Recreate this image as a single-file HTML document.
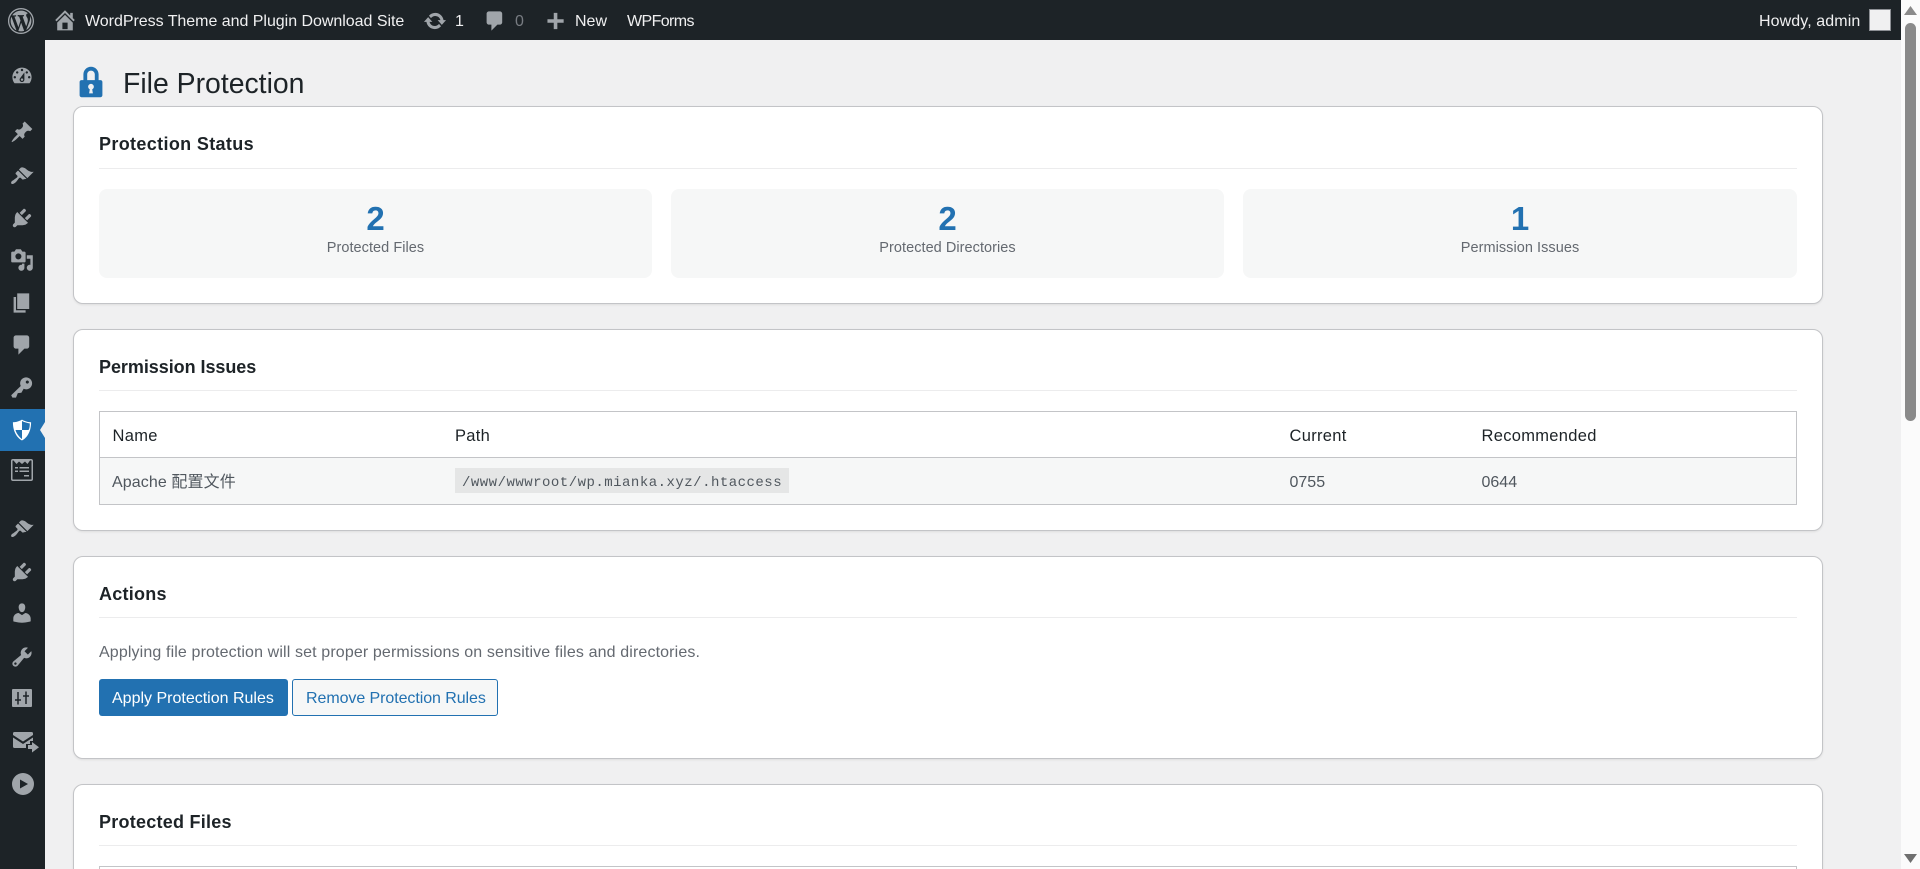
<!DOCTYPE html>
<html lang="en">
<head>
<meta charset="utf-8">
<title>File Protection</title>
<style>
html,body{margin:0;padding:0;width:1920px;height:869px;overflow:hidden;background:#f0f0f1;font-family:"Liberation Sans","Noto Sans CJK SC",sans-serif}
*{box-sizing:border-box}
#wrap{position:relative;width:1920px;height:869px;overflow:hidden;background:#f0f0f1}
.a{position:absolute}
.t{position:absolute;white-space:nowrap;line-height:20px;height:20px}
svg{position:absolute;display:block}
#bar{left:0;top:0;width:1901px;height:40px;background:#1d2327}
#side{left:0;top:40px;width:45px;height:829px;background:#1d2327}
#sb{left:1901px;top:0;width:19px;height:869px;background:#fbfbfb}
.bt{color:#f0f0f1;font-size:16px}
.i{fill:#a0a5aa}
.card{position:absolute;left:73px;width:1750px;background:#fff;border:1px solid #c3c4c7;border-radius:10px;box-shadow:0 1px 2px rgba(0,0,0,.08)}
.h{position:absolute;left:99px;font-size:18px;font-weight:bold;color:#1d2327;white-space:nowrap;line-height:20px;height:20px;letter-spacing:.25px}
.hr{position:absolute;left:99px;width:1698px;height:1px;background:#ececed}
.stat{position:absolute;top:189px;height:89px;width:553px;background:#f6f7f7;border-radius:8px}
.n{position:absolute;left:0;right:0;top:12px;text-align:center;font-size:33px;font-weight:bold;color:#2271b1;line-height:36px}
.l{position:absolute;left:0;right:0;top:49px;text-align:center;font-size:14.5px;color:#646970;line-height:20px;letter-spacing:.05px}
.tb{position:absolute;left:99px;width:1698px;border:1px solid #c3c4c7}
.th{color:#1d2327;font-size:16.5px;letter-spacing:.3px}
.td{color:#50575e;font-size:16px}
</style>
</head>
<body>
<div id="wrap">
<div class="a" id="bar"></div>
<div class="a" id="side"></div>
<div class="a" id="sb">
  <svg style="left:3px;top:6px" width="13" height="9" viewBox="0 0 13 9"><path d="M6.5 0L13 9H0z" fill="#8a8a8a"/></svg>
  <div class="a" style="left:4px;top:23px;width:11px;height:398px;background:#8a8a8a;border-radius:6px"></div>
  <svg style="left:3px;top:854px" width="13" height="9" viewBox="0 0 13 9"><path d="M0 0h13L6.5 9z" fill="#6f6f6f"/></svg>
</div>

<!-- admin bar -->
<svg style="left:8px;top:8px" width="26" height="26" viewBox="0 0 20 20"><path class="i" d="M20 10c0-5.52-4.48-10-10-10S0 4.48 0 10s4.48 10 10 10 10-4.48 10-10zM10 1.01c4.96 0 8.99 4.03 8.99 8.99s-4.03 8.99-8.99 8.99S1.01 14.96 1.01 10 5.04 1.01 10 1.01zM8.01 14.82L4.96 6.61c.49-.03 1.05-.08 1.05-.08.43-.05.38-1.01-.06-.99 0 0-1.29.1-2.13.1-.15 0-.33 0-.52-.01 1.44-2.17 3.9-3.6 6.7-3.6 2.09 0 3.99.79 5.41 2.09-.6-.08-1.45.35-1.45 1.42 0 .66.38 1.22.79 1.88.31.54.5 1.22.5 2.21 0 1.34-1.27 4.48-1.27 4.48l-2.71-7.5c.48-.03.75-.16.75-.16.43-.05.38-1.1-.05-1.08 0 0-1.3.11-2.14.11-.78 0-2.11-.11-2.11-.11-.43-.02-.48 1.06-.05 1.08l.84.08 1.12 3.04zm6.02 2.15L16.64 10s.67-1.69.39-3.81c.63 1.14.94 2.42.94 3.81 0 2.96-1.56 5.58-3.94 6.97zM2.68 6.77L6.5 17.25c-2.67-1.3-4.47-4.04-4.47-7.25 0-1.18.2-2.26.65-3.23zm7.45 4.53l2.29 6.25c-.75.27-1.57.42-2.42.42-.72 0-1.41-.11-2.06-.3z"/></svg>
<svg style="left:52px;top:7px" width="26" height="26" viewBox="0 0 20 20"><path class="i" d="M16 8.5l1.53 1.53-1.06 1.06L10 4.62l-6.47 6.47-1.06-1.06L10 2.5l4 4v-2h2v4zm-6-2.46l6 5.99V18H4v-5.97zM12 17v-5H8v5h4z"/></svg>
<div class="t bt" style="left:85px;top:12px;letter-spacing:-.03px">WordPress Theme and Plugin Download Site</div>
<svg style="left:423px;top:9px" width="24" height="24" viewBox="0 0 20 20"><path class="i" d="M10.2 3.28c3.53 0 6.43 2.61 6.92 6h2.08l-3.5 4-3.5-4h2.32c-.45-1.97-2.21-3.45-4.32-3.45-1.45 0-2.73.71-3.54 1.78L4.95 5.66C6.23 4.2 8.11 3.28 10.2 3.28zm-.4 13.44c-3.52 0-6.43-2.61-6.92-6H.8l3.5-4c1.17 1.33 2.33 2.67 3.5 4H5.48c.45 1.97 2.21 3.45 4.32 3.45 1.45 0 2.73-.71 3.54-1.78l1.71 1.95c-1.28 1.46-3.15 2.38-5.25 2.38z"/></svg>
<div class="t bt" style="left:455px;top:12px">1</div>
<svg style="left:483px;top:9px" width="24" height="24" viewBox="0 0 20 20"><path class="i" d="M5 2h9c1.1 0 2 .9 2 2v7c0 1.1-.9 2-2 2h-2l-5 5v-5H5c-1.1 0-2-.9-2-2V4c0-1.1.9-2 2-2z"/></svg>
<div class="t bt" style="left:515px;top:12px;color:#787c82">0</div>
<svg style="left:547px;top:12px" width="18" height="18" viewBox="0 0 20 20"><path class="i" d="M7.5 1h4v7H18.500v4h-7v7h-4v-7H.5V8h7z"/></svg>
<div class="t bt" style="left:575px;top:12px">New</div>
<div class="t bt" style="left:627px;top:12px;letter-spacing:-.6px">WPForms</div>
<div class="t bt" style="left:1759px;top:12px;letter-spacing:.1px">Howdy, admin</div>
<div class="a" style="left:1869px;top:9px;width:22px;height:22px;background:#f0f0f1;border:1px solid #8c8f94"></div>

<!-- side menu -->
<svg style="left:10px;top:64px" width="24" height="24" viewBox="0 0 20 20"><path class="i" d="M3.76 16h12.48c1.1-1.37 1.76-3.11 1.76-5 0-4.42-3.58-8-8-8s-8 3.58-8 8c0 1.89.66 3.63 1.76 5zM10 4c.55 0 1 .45 1 1s-.45 1-1 1-1-.45-1-1 .45-1 1-1zM6 6c.55 0 1 .45 1 1s-.45 1-1 1-1-.45-1-1 .45-1 1-1zm8 0c.55 0 1 .45 1 1s-.45 1-1 1-1-.45-1-1 .45-1 1-1zm-5.37 5.55L12 7v6c0 1.1-.9 2-2 2s-2-.9-2-2c0-.57.24-1.08.63-1.45zM4 10c.55 0 1 .45 1 1s-.45 1-1 1-1-.45-1-1 .45-1 1-1zm12 0c.55 0 1 .45 1 1s-.45 1-1 1-1-.45-1-1 .45-1 1-1zm-5 3c0-.55-.45-1-1-1s-1 .45-1 1 .45 1 1 1 1-.45 1-1z"/></svg>
<svg style="left:10px;top:120px" width="24" height="24" viewBox="0 0 20 20"><path class="i" d="M10.44 3.02l1.82-1.82 6.36 6.35-1.83 1.82c-1.05-.68-2.48-.57-3.41.36l-.75.75c-.92.93-1.04 2.35-.35 3.41l-1.83 1.82-2.41-2.41-2.8 2.79c-.42.42-3.38 2.71-3.8 2.29s1.86-3.39 2.28-3.81l2.79-2.79L4.1 9.36l1.83-1.82c1.05.69 2.48.57 3.4-.36l.75-.75c.93-.92 1.05-2.35.36-3.41z"/></svg>
<svg style="left:10px;top:163px" width="24" height="24" viewBox="0 0 20 20"><path class="i" d="M14.48 11.06L7.41 3.99l1.5-1.5c.5-.56 2.3-.47 3.51.32 1.21.8 1.43 1.28 2.91 2.1 1.18.64 2.45 1.26 4.45.85zm-.71.71L6.7 4.7 4.93 6.47c-.39.39-.39 1.02 0 1.41l1.06 1.06c.39.39.39 1.03 0 1.42-.6.6-1.43 1.11-2.21 1.69-.35.26-.7.53-1.01.84C1.43 13.23.4 14.89 1.25 15.74c.84.84 2.5-.18 3.84-1.52.31-.31.58-.66.85-1.02.57-.78 1.08-1.61 1.69-2.21.39-.39 1.02-.39 1.41 0l1.06 1.06c.39.39 1.02.39 1.41 0z" transform="translate(0 1.500)"/></svg>
<svg style="left:10px;top:206px" width="24" height="24" viewBox="0 0 20 20"><path class="i" d="M13.11 4.36L9.87 7.6 8 5.73l3.24-3.24c.35-.34 1.05-.2 1.56.32.52.51.66 1.21.31 1.55zm-8 1.77l.91-1.12 9.01 9.01-1.19.84c-.71.71-2.63 1.16-3.82 1.16H6.14L4.9 17.26c-.59.59-1.54.59-2.12 0-.59-.58-.59-1.53 0-2.12l1.24-1.24v-3.88c0-1.13.4-3.19 1.09-3.89zm7.26 3.97l3.24-3.24c.34-.35 1.04-.21 1.55.31.52.51.66 1.21.31 1.55l-3.24 3.25z"/></svg>
<svg style="left:10px;top:248px" width="24" height="24" viewBox="0 0 20 20"><path class="i" d="M13 11V4c0-.55-.45-1-1-1h-1.670L9 1H5L3.670 3H2c-.55 0-1 .45-1 1v7c0 .55.45 1 1 1h10c.55 0 1-.45 1-1zM7 4.500c1.380 0 2.500 1.120 2.500 2.500S8.380 9.500 7 9.500 4.500 8.380 4.500 7 5.620 4.500 7 4.500zM14 6h5v10.500c0 1.380-1.120 2.500-2.500 2.500S14 17.880 14 16.500s1.120-2.500 2.500-2.500c.17 0 .34.02.5.05V9h-3V6zm-4 8.050V13h2v3.500c0 1.380-1.120 2.500-2.500 2.500S7 17.880 7 16.500 8.120 14 9.500 14c.17 0 .34.02.5.05z"/></svg>
<svg style="left:10px;top:291px" width="24" height="24" viewBox="0 0 20 20"><path class="i" d="M6 15V2h10v13H6zm-1 1h8v2H3V5h2v11z"/></svg>
<svg style="left:10px;top:333px" width="24" height="24" viewBox="0 0 20 20"><path class="i" d="M5 2h9c1.100 0 2 .9 2 2v7c0 1.100-.9 2-2 2h-2l-5 5v-5H5c-1.100 0-2-.9-2-2V4c0-1.100.9-2 2-2z"/></svg>
<svg style="left:10px;top:376px" width="24" height="24" viewBox="0 0 20 20"><path class="i" d="M16.950 2.580c1.960 1.950 1.960 5.120 0 7.070-1.510 1.510-3.750 1.840-5.590 1.010l-1.870 3.310-2.990.31L5 18H2l-1-2 7.950-7.690c-.92-1.870-.62-4.180.93-5.730 1.950-1.960 5.120-1.960 7.070 0zm-2.510 3.790c.74 0 1.330-.6 1.330-1.340 0-.73-.59-1.330-1.330-1.330-.73 0-1.330.6-1.330 1.330 0 .74.6 1.340 1.330 1.340z"/></svg>
<div class="a" style="left:0;top:409px;width:45px;height:42px;background:#2271b1"></div>
<svg style="left:40px;top:422px" width="5" height="16" viewBox="0 0 5 16"><path d="M5 0v16L0 8z" fill="#f0f0f1"/></svg>
<svg style="left:9px;top:417px" width="26" height="26" viewBox="0 0 20 20"><path fill="#fff" d="M10 2s3 2 7 2c0 11-7 14-7 14S3 15 3 4c4 0 7-2 7-2zm0 8h5s1-1 1-5c0 0-5-1-6-2v7H5c1 4 5 7 5 7v-7z"/></svg>
<svg style="left:11px;top:459px" width="22" height="22" viewBox="0 0 22 22"><path class="i" fill-rule="evenodd" d="M2 0h18a2 2 0 0 1 2 2v18a2 2 0 0 1-2 2H2a2 2 0 0 1-2-2V2a2 2 0 0 1 2-2zm0 1.500a.5.5 0 0 0-.5.5v18a.5.5 0 0 0 .5.5h18a.5.5 0 0 0 .5-.5V2a.5.5 0 0 0-.5-.5h-1L16.500 5 14 2.500 11 5 8 2.500 5.500 5 2.500 1.500zM4 8h3v1.500H4zm4.500 0H18v1.500H8.500zM4 11.500h3V13H4zm4.500 0H18V13H8.500zM13 16h5v1.500h-5z"/></svg>
<svg style="left:10px;top:516px" width="24" height="24" viewBox="0 0 20 20"><path class="i" d="M14.480 11.060L7.410 3.990l1.500-1.500c.5-.56 2.300-.47 3.510.32 1.210.8 1.430 1.280 2.910 2.100 1.180.64 2.450 1.260 4.450.85zm-.71.71L6.700 4.700 4.930 6.470c-.39.39-.39 1.020 0 1.410l1.060 1.060c.39.39.39 1.030 0 1.420-.6.6-1.430 1.110-2.210 1.690-.35.26-.7.53-1.010.84C1.430 13.230.4 14.890 1.250 15.740c.84.84 2.500-.18 3.840-1.520.31-.31.58-.66.85-1.020.57-.78 1.080-1.610 1.690-2.210.39-.39 1.020-.39 1.410 0l1.060 1.060c.39.39 1.020.39 1.410 0z" transform="translate(0 1.500)"/></svg>
<svg style="left:10px;top:560px" width="24" height="24" viewBox="0 0 20 20"><path class="i" d="M13.110 4.360L9.870 7.600 8 5.730l3.240-3.240c.35-.34 1.050-.2 1.560.32.52.51.66 1.210.31 1.550zm-8 1.770l.91-1.120 9.010 9.010-1.190.84c-.71.71-2.630 1.160-3.820 1.160H6.140L4.900 17.260c-.59.59-1.540.59-2.120 0-.59-.58-.59-1.530 0-2.120l1.240-1.240v-3.880c0-1.130.4-3.190 1.090-3.890zm7.260 3.970l3.240-3.240c.34-.35 1.040-.21 1.550.31.52.51.66 1.210.31 1.550l-3.240 3.250z"/></svg>
<svg style="left:10px;top:601px" width="24" height="24" viewBox="0 0 20 20"><path class="i" d="M10 9.250c-2.270 0-2.730-3.440-2.730-3.440C7 4.020 7.820 2 9.970 2c2.160 0 2.980 2.020 2.710 3.810 0 0-.41 3.440-2.680 3.440zm0 2.570L12.720 10c2.390 0 4.520 2.330 4.520 4.530v2.490s-3.650 1.130-7.240 1.130c-3.650 0-7.240-1.130-7.240-1.130v-2.490c0-2.250 1.940-4.480 4.470-4.480z"/></svg>
<svg style="left:10px;top:645px" width="24" height="24" viewBox="0 0 20 20"><path class="i" d="M16.680 9.770c-1.340 1.340-3.300 1.670-4.950.99l-5.410 6.520c-.99.99-2.590.99-3.580 0s-.99-2.590 0-3.570l6.520-5.420c-.68-1.650-.35-3.610.99-4.950 1.280-1.280 3.120-1.620 4.720-1.060l-2.890 2.890 2.820 2.820 2.860-2.870c.53 1.580.18 3.390-1.080 4.650zM3.810 16.210c.4.39 1.040.39 1.430 0 .4-.4.4-1.040 0-1.430-.39-.4-1.030-.4-1.430 0-.39.39-.39 1.030 0 1.430z"/></svg>
<svg style="left:12px;top:689px" width="20" height="18" viewBox="0 0 20 18"><rect class="i" width="20" height="18" rx="1"/><path d="M6 3v12.500M3 11h6M14 2.500V15M11 7h6" stroke="#1d2327" stroke-width="1.500" fill="none"/></svg>
<svg style="left:13px;top:732px" width="26" height="21" viewBox="0 0 26 21"><path class="i" d="M1.500 0h17A1.500 1.500 0 0 1 20 1.500V3l-10 6.500L0 3V1.500A1.500 1.500 0 0 1 1.500 0zM0 5.500l10 6.500 10-6.500V9h-3v3h-4v4H1.500A1.500 1.500 0 0 1 0 14.500zM19 10v3h-4v4h4v3.500l7-5.250z"/></svg>
<svg style="left:12px;top:773px" width="22" height="22" viewBox="0 0 22 22"><path class="i" fill-rule="evenodd" d="M11 0a11 11 0 1 1 0 22a11 11 0 0 1 0-22zM8 6.500v9L16 11z"/></svg>

<!-- page title -->
<svg style="left:72.400px;top:63.200px" width="38" height="38" viewBox="0 0 20 20"><path fill="#2271b1" d="M14 9h1c.55 0 1 .45 1 1v7c0 .55-.45 1-1 1H5c-.55 0-1-.45-1-1v-7c0-.55.45-1 1-1h1V6c0-2.210 1.790-4 4-4s4 1.790 4 4v3zm-2 0V6c0-1.100-.9-2-2-2s-2 .9-2 2v3h4zm-1 7l-.36-2.150c.51-.24.86-.75.86-1.350 0-.83-.67-1.500-1.500-1.500s-1.500.67-1.500 1.500c0 .6.35 1.110.86 1.350L9 16h2z"/></svg>
<div class="t" style="left:123px;top:68px;height:32px;line-height:32px;font-size:28.400px;color:#1d2327">File Protection</div>

<!-- card 1 -->
<div class="card" style="top:106px;height:198px"></div>
<div class="h" style="top:134px;letter-spacing:.35px">Protection Status</div>
<div class="hr" style="top:168px"></div>
<div class="stat" style="left:99px"><div class="n">2</div><div class="l">Protected Files</div></div>
<div class="stat" style="left:671px"><div class="n">2</div><div class="l">Protected Directories</div></div>
<div class="stat" style="left:1243px;width:554px"><div class="n">1</div><div class="l">Permission Issues</div></div>

<!-- card 2 -->
<div class="card" style="top:329px;height:202px"></div>
<div class="h" style="top:357px;letter-spacing:-.05px">Permission Issues</div>
<div class="hr" style="top:390px"></div>
<div class="tb" style="top:411px;height:94px">
  <div class="a" style="left:0;right:0;top:45px;height:1px;background:#c3c4c7"></div>
  <div class="a" style="left:0;right:0;top:46px;bottom:0;background:#f6f7f7"></div>
</div>
<div class="t th" style="left:112.500px;top:426px">Name</div>
<div class="t th" style="left:455px;top:426px">Path</div>
<div class="t th" style="left:1289.500px;top:426px">Current</div>
<div class="t th" style="left:1481.500px;top:426px">Recommended</div>
<div class="t td" style="left:112px;top:473px;letter-spacing:.1px">Apache 配置文件</div>
<div class="a" style="left:455px;top:468px;width:334px;height:25px;background:#e5e6e6"></div>
<div class="t" style="left:462px;top:473px;font-family:'Liberation Mono',monospace;font-size:14px;letter-spacing:.49px;color:#50575e">/www/wwwroot/wp.mianka.xyz/.htaccess</div>
<div class="t td" style="left:1289.500px;top:473px">0755</div>
<div class="t td" style="left:1481.500px;top:473px">0644</div>

<!-- card 3 -->
<div class="card" style="top:556px;height:203px"></div>
<div class="h" style="top:584px">Actions</div>
<div class="hr" style="top:617px"></div>
<div class="t" style="left:99px;top:643px;font-size:16px;color:#646970;letter-spacing:.13px">Applying file protection will set proper permissions on sensitive files and directories.</div>
<div class="a" style="left:99px;top:679px;width:189px;height:37px;background:#2271b1;border-radius:3px"></div>
<div class="t" style="left:112px;top:689px;font-size:16px;color:#fff">Apply Protection Rules</div>
<div class="a" style="left:292px;top:679px;width:206px;height:37px;background:#f6f7f7;border:1px solid #2271b1;border-radius:3px"></div>
<div class="t" style="left:306px;top:689px;font-size:16px;color:#2271b1;letter-spacing:-.07px">Remove Protection Rules</div>

<!-- card 4 -->
<div class="card" style="top:784px;height:120px"></div>
<div class="h" style="top:812px">Protected Files</div>
<div class="hr" style="top:845px"></div>
<div class="a" style="left:99px;top:866px;width:1698px;height:40px;border:1px solid #c3c4c7;background:#fff"></div>
</div>
</body>
</html>
